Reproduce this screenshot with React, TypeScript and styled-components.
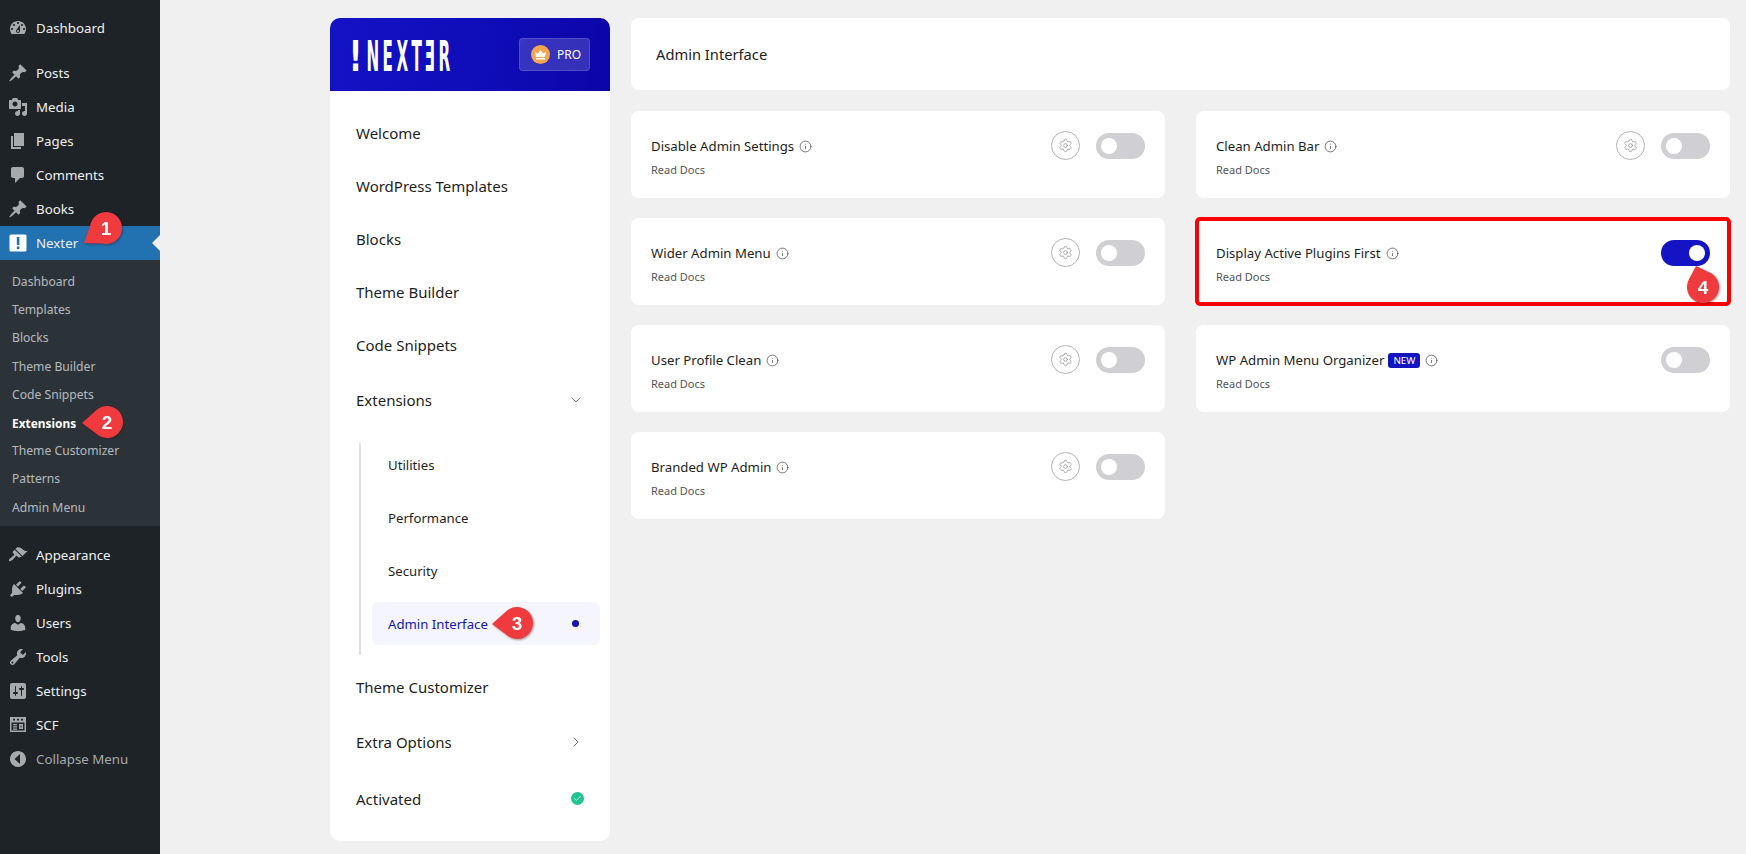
import React from "react";
import styled, { createGlobalStyle } from "styled-components";
import { Settings, Info, ChevronDown, ChevronRight, Check } from "lucide-react";

const Global = createGlobalStyle`
  html, body { margin: 0; padding: 0; background: #f0f0f1; }
  body { font-family: "Noto Sans", "Open Sans", sans-serif; }
  * { box-sizing: border-box; }
`;

const Page = styled.div`
  position: relative;
  display: flex;
  width: 1746px;
  height: 854px;
  overflow: hidden;
  background: #f0f0f1;
`;

const Sidebar = styled.nav`
  width: 160px;
  flex: none;
  background: #1d2327;
  padding-top: 11px;
`;

const MenuItem = styled.div<{ $active?: boolean; $muted?: boolean; $mt?: number }>`
  position: relative;
  display: flex;
  align-items: center;
  height: 34px;
  margin-top: ${(p) => p.$mt ?? 0}px;
  padding-left: 8px;
  gap: 8px;
  font-size: 13.3px;
  color: ${(p) => (p.$muted ? "#a7aaad" : "#f0f0f1")};
  background: ${(p) => (p.$active ? "#2271b1" : "transparent")};
  ${(p) =>
    p.$active
      ? `&::after {
          content: "";
          position: absolute;
          right: 0;
          top: 50%;
          margin-top: -8px;
          border: 8px solid transparent;
          border-right-color: #f0f0f1;
          border-left-width: 0;
        }`
      : ""}
`;

const MenuIcon = styled.svg<{ $light?: boolean }>`
  width: 20px;
  height: 20px;
  flex: none;
  fill: ${(p) => (p.$light ? "#ffffff" : "#a7aaad")};
`;

const SubMenu = styled.div`
  background: #2c3338;
  padding: 8px 0 4px;
`;

const SubItem = styled.div<{ $current?: boolean }>`
  position: relative;
  height: 28.2px;
  line-height: 28px;
  padding-left: 12px;
  font-size: ${(p) => (p.$current ? "11.9px" : "12.15px")};
  font-weight: ${(p) => (p.$current ? 700 : 400)};
  color: ${(p) => (p.$current ? "#ffffff" : "rgba(240,246,252,0.7)")};
`;

const Content = styled.main`
  flex: 1;
  display: flex;
  gap: 21px;
  padding: 18px 16px 13px 170px;
`;

const Panel = styled.aside`
  width: 280px;
  flex: none;
  background: #ffffff;
  border-radius: 10px;
  overflow: hidden;
`;

const PanelHead = styled.div`
  height: 73px;
  display: flex;
  align-items: center;
  justify-content: space-between;
  padding: 0 20px 0 19px;
  background: linear-gradient(100deg, #1313c6 0%, #0f0db8 55%, #0c05a8 100%);
`;

const Logo = styled.svg`
  width: 102px;
  height: 36px;
  display: block;
  overflow: visible;
`;

const ProBadge = styled.div`
  width: 71px;
  height: 33px;
  display: flex;
  align-items: center;
  gap: 7px;
  padding-left: 11px;
  font-size: 12px;
  color: #ffffff;
  background: rgba(255, 255, 255, 0.17);
  border: 1px solid rgba(255, 255, 255, 0.14);
  border-radius: 4px;
`;

const Crown = styled.span`
  width: 19px;
  height: 19px;
  border-radius: 50%;
  background: #f5a54f;
  display: flex;
  align-items: center;
  justify-content: center;
`;

const NavList = styled.div`
  padding-top: 15px;
`;

const NavRow = styled.div<{ $mt?: number }>`
  display: flex;
  align-items: center;
  justify-content: space-between;
  height: 53px;
  margin-top: ${(p) => p.$mt ?? 0}px;
  padding: 0 26px;
  font-size: 15px;
  color: #1e1e1e;
`;

const SubList = styled.div`
  margin: 17px 10px 0 29px;
  padding: 0 0 10px 11px;
  border-left: 2px solid #e1e1e4;
  display: flex;
  flex-direction: column;
  gap: 10px;
`;

const SubRow = styled.div<{ $active?: boolean }>`
  position: relative;
  height: 43px;
  display: flex;
  align-items: center;
  justify-content: space-between;
  padding: 0 21px 0 16px;
  border-radius: 6px;
  font-size: 13.2px;
  color: ${(p) => (p.$active ? "#1414b8" : "#1e1e1e")};
  background: ${(p) => (p.$active ? "#f5f6fd" : "transparent")};
`;

const Dot = styled.span`
  width: 7px;
  height: 7px;
  border-radius: 50%;
  background: #1414b8;
`;

const Activated = styled.span`
  width: 13px;
  height: 13px;
  border-radius: 50%;
  background: #1fc392;
  display: flex;
  align-items: center;
  justify-content: center;
`;

const Main = styled.section`
  flex: 1;
  display: flex;
  flex-direction: column;
  gap: 21px;
`;

const TopBar = styled.header`
  height: 72px;
  display: flex;
  align-items: center;
  padding-left: 25px;
  background: #ffffff;
  border-radius: 8px;
  font-size: 14.7px;
  color: #1e1e1e;
`;

const Columns = styled.div`
  display: flex;
  gap: 31px;
  align-items: flex-start;
`;

const Column = styled.div`
  flex: 1;
  display: flex;
  flex-direction: column;
  gap: 20px;
`;

const Card = styled.article<{ $highlight?: boolean }>`
  position: relative;
  height: 87px;
  display: flex;
  justify-content: space-between;
  padding: 20px 20px 0 20px;
  background: #ffffff;
  border-radius: ${(p) => (p.$highlight ? "4px" : "8px")};
  ${(p) => (p.$highlight ? "outline: 4px solid #fb0000; outline-offset: -3px;" : "")}
`;

const CardText = styled.div`
  padding-top: 5px;
`;

const TitleLine = styled.div`
  display: flex;
  align-items: center;
  height: 20px;
  gap: 5px;
  font-size: 13.2px;
  color: #1e1e1e;
`;

const InfoIcon = styled(Info)`
  width: 13px;
  height: 13px;
  color: #444;
`;

const NewBadge = styled.span`
  height: 15px;
  padding: 0 5px;
  margin: 0 0 0 -1px;
  display: inline-flex;
  align-items: center;
  border-radius: 3px;
  background: #1414c0;
  color: #ffffff;
  font-size: 9.8px;
`;

const Docs = styled.div`
  margin-top: 6px;
  line-height: 16px;
  font-size: 11px;
  color: #555;
`;

const Controls = styled.div`
  display: flex;
  align-items: center;
  gap: 16px;
  height: 29px;
`;

const GearButton = styled.span`
  width: 29px;
  height: 29px;
  border: 1px solid #b4b4b8;
  border-radius: 50%;
  display: flex;
  align-items: center;
  justify-content: center;
  color: #8a8a8e;
`;

const Toggle = styled.span<{ $on?: boolean }>`
  width: 49px;
  height: 26px;
  padding: 0 5px;
  border-radius: 13px;
  display: flex;
  align-items: center;
  justify-content: ${(p) => (p.$on ? "flex-end" : "flex-start")};
  background: ${(p) => (p.$on ? "#1414c4" : "#d0d0d4")};
`;

const Knob = styled.span`
  width: 16px;
  height: 16px;
  border-radius: 50%;
  background: #ffffff;
`;

const CalloutSvg = styled.svg<{ $x: number; $y: number }>`
  position: absolute;
  left: ${(p) => p.$x - 40}px;
  top: ${(p) => p.$y - 40}px;
  width: 80px;
  height: 80px;
  overflow: visible;
  filter: drop-shadow(1px 1.5px 1px rgba(60, 20, 20, 0.45));
  z-index: 5;
`;

const CalloutNum = styled.text`
  font-family: "Liberation Sans", sans-serif;
  font-weight: 700;
  font-size: 19px;
  fill: #ffffff;
`;

const LogoText = styled.text`
  font-family: "DejaVu Sans", sans-serif;
  font-weight: 700;
  font-size: 42px;
  fill: #ffffff;
`;

/* Balloon with its tail pointing at (tx, ty); coordinates are page pixels. */
function Callout({ n, x, y, tx, ty, r = 16 }: { n: number; x: number; y: number; tx: number; ty: number; r?: number }) {
  const a = Math.atan2(ty - y, tx - x);
  const s = 0.75;
  const px = (d: number) => 40 + r * Math.cos(a + d);
  const py = (d: number) => 40 + r * Math.sin(a + d);
  const d = `M${40 + tx - x} ${40 + ty - y}L${px(s)} ${py(s)}A${r} ${r} 0 1 1 ${px(-s)} ${py(-s)}Z`;
  return (
    <CalloutSvg $x={x} $y={y} viewBox="0 0 80 80">
      <path d={d} fill="#ef3a3e" />
      <CalloutNum x="40" y="47" textAnchor="middle">{n}</CalloutNum>
    </CalloutSvg>
  );
}

const icons: Record<string, string> = {
  dashboard:
    "M3.76 16h12.48c1.1-1.37 1.76-3.11 1.76-5 0-4.42-3.58-8-8-8s-8 3.58-8 8c0 1.89.66 3.63 1.76 5zM10 4c.55 0 1 .45 1 1s-.45 1-1 1-1-.45-1-1 .45-1 1-1zM6 6c.55 0 1 .45 1 1s-.45 1-1 1-1-.45-1-1 .45-1 1-1zm8 0c.55 0 1 .45 1 1s-.45 1-1 1-1-.45-1-1 .45-1 1-1zm-5.37 5.55L12 7v6c0 1.1-.9 2-2 2s-2-.9-2-2c0-.57.24-1.08.63-1.45zM4 10c.55 0 1 .45 1 1s-.45 1-1 1-1-.45-1-1 .45-1 1-1zm12 0c.55 0 1 .45 1 1s-.45 1-1 1-1-.45-1-1 .45-1 1-1zm-5 3c0-.55-.45-1-1-1s-1 .45-1 1 .45 1 1 1 1-.45 1-1z",
  pin:
    "M10.44 3.02l1.82-1.82 6.36 6.35-1.83 1.82c-1.05-.68-2.48-.57-3.41.36l-.75.75c-.92.93-1.04 2.35-.35 3.41l-1.83 1.82-2.41-2.41-2.8 2.79c-.42.42-3.38 2.71-3.8 2.29s1.86-3.39 2.28-3.81l2.79-2.79L4.1 9.36l1.83-1.82c1.05.69 2.48.57 3.4-.36l.75-.75c.93-.92 1.05-2.35.36-3.41z",
  media:
    "M13 11V4c0-.55-.45-1-1-1h-1.67L9 1H5L3.67 3H2c-.55 0-1 .45-1 1v7c0 .55.45 1 1 1h10c.55 0 1-.45 1-1zM7 4.5c1.38 0 2.5 1.12 2.5 2.5S8.38 9.5 7 9.5 4.5 8.38 4.5 7 5.62 4.5 7 4.5zM14 6h5v10.5c0 1.38-1.12 2.5-2.5 2.5S14 17.88 14 16.5s1.12-2.5 2.5-2.5c.17 0 .34.02.5.05V9h-3V6zm-4 8.05V13h2v3.5c0 1.38-1.12 2.5-2.5 2.5S7 17.88 7 16.5 8.12 14 9.5 14c.17 0 .34.02.5.05z",
  page: "M6 15V2h10v13H6zm-1 1h8v2H3V5h2v11z",
  comments: "M5 2h9c1.1 0 2 .9 2 2v7c0 1.1-.9 2-2 2h-2l-5 5v-5H5c-1.1 0-2-.9-2-2V4c0-1.1.9-2 2-2z",
  appearance:
    "M14.48 11.06L7.41 3.99l1.5-1.5c.5-.56 2.3-.47 3.51.32 1.21.8 1.43 1.28 2.91 2.1 1.18.64 2.45 1.26 4.45.85zm-.71.71L6.7 4.7 4.93 6.47c-.39.39-.39 1.02 0 1.41l1.06 1.06c.39.39.39 1.03 0 1.42-.6.6-1.43 1.11-2.21 1.69-.35.26-.7.53-1.01.84C1.43 13.23.4 15.32 1.1 16.02c.7.7 2.78-.34 4.12-1.67.31-.31.58-.66.84-1.01.58-.78 1.09-1.61 1.69-2.21.39-.39 1.03-.39 1.42 0l1.06 1.06c.39.39 1.02.39 1.41 0z",
  plugins:
    "M13.11 4.36L9.87 7.6 8 5.73l3.24-3.24c.35-.34 1.05-.2 1.56.32.52.51.66 1.21.31 1.55zm-8 1.77l.91-1.12 9.01 9.01-1.19.84c-.71.71-2.63 1.16-3.82 1.16H6.14L4.9 17.26c-.59.59-1.54.59-2.12 0-.59-.58-.59-1.53 0-2.12l1.24-1.24v-3.88c0-1.13.4-3.19 1.09-3.89zm7.26 3.97l3.24-3.24c.34-.35 1.04-.21 1.55.31.52.51.66 1.21.31 1.55l-3.24 3.25z",
  users:
    "M10 9.25c-2.27 0-2.73-3.44-2.73-3.44C7 4.02 7.82 2 9.97 2c2.16 0 2.98 2.02 2.71 3.81 0 0-.41 3.44-2.68 3.44zm0 2.57L12.72 10c2.39 0 4.52 2.33 4.52 4.53v2.49s-3.65 1.13-7.24 1.13c-3.65 0-7.24-1.13-7.24-1.13v-2.49c0-2.25 1.94-4.48 4.47-4.48z",
  tools:
    "M16.68 9.77c-1.34 1.34-3.3 1.67-4.95.99l-5.41 6.52c-.99.99-2.59.99-3.58 0s-.99-2.59 0-3.57l6.52-5.42c-.68-1.65-.35-3.61.99-4.95 1.28-1.28 3.12-1.62 4.72-1.06l-2.89 2.89 2.82 2.82 2.86-2.87c.53 1.58.18 3.39-1.08 4.65zM3.81 16.21c.4.39 1.04.39 1.43 0 .4-.4.4-1.04 0-1.43-.39-.4-1.03-.4-1.43 0-.39.39-.39 1.03 0 1.43z",
  settings:
    "M18 16V4c0-1.1-.9-2-2-2H4c-1.1 0-2 .9-2 2v12c0 1.1.9 2 2 2h12c1.1 0 2-.9 2-2zM8 11h1c.55 0 1 .45 1 1s-.45 1-1 1H8v1.5c0 .28-.22.5-.5.5s-.5-.22-.5-.5V13H6c-.55 0-1-.45-1-1s.45-1 1-1h1V5.5c0-.28.22-.5.5-.5s.5.22.5.5V11zm5-2h-1c-.55 0-1-.45-1-1s.45-1 1-1h1V5.5c0-.28.22-.5.5-.5s.5.22.5.5V7h1c.55 0 1 .45 1 1s-.45 1-1 1h-1v5.5c0 .28-.22.5-.5.5s-.5-.22-.5-.5V9z",
  scf:
    "M2 2h16v15H2V2zm1.500 5.500V15.500h13V7.500h-13zM5 3.800v1.700h2V3.800H5zm4 0v1.700h2V3.800H9zm4 0v1.700h2V3.800h-2zM5 9h4v1.200H5V9zm6 0h4v5h-4V9zm1.500 1.500v2h1v-2h-1zM5 11.300h4v1.200H5v-1.200zM5 13.500h4v1.200H5v-1.200z",
  collapse: "M18 10c0-4.420-3.580-8-8-8s-8 3.580-8 8 3.580 8 8 8 8-3.580 8-8zm-6 5L6.500 10 12 5v10z",
};

const Icon = ({ name }: { name: string }) => (
  <MenuIcon viewBox="0 0 20 20">
    <path fillRule="evenodd" d={icons[name]} />
  </MenuIcon>
);

const subItems = ["Dashboard", "Templates", "Blocks", "Theme Builder", "Code Snippets", "Extensions", "Theme Customizer", "Patterns", "Admin Menu"];
const topItems = [["Posts", "pin"], ["Media", "media"], ["Pages", "page"], ["Comments", "comments"], ["Books", "pin"]];
const lowItems = [["Plugins", "plugins"], ["Users", "users"], ["Tools", "tools"], ["Settings", "settings"], ["SCF", "scf"]];
const navTop = ["Welcome", "WordPress Templates", "Blocks", "Theme Builder", "Code Snippets"];
const leftCards = ["Disable Admin Settings", "Wider Admin Menu", "User Profile Clean", "Branded WP Admin"];
const LOGO_SCALE = 0.36;
const logoX = [17.5, 33.5, 47.5, 62.5, 75.5, 89.5].map((v) => v / LOGO_SCALE).join(" ");

const LeftCard = ({ title }: { title: string }) => (
  <Card>
    <CardText>
      <TitleLine>{title}<InfoIcon strokeWidth={1.3} /></TitleLine>
      <Docs>Read Docs</Docs>
    </CardText>
    <Controls>
      <GearButton><Settings size={15} strokeWidth={1.1} /></GearButton>
      <Toggle><Knob /></Toggle>
    </Controls>
  </Card>
);

export default function App() {
  return (
    <Page>
      <Global />
      <Sidebar>
        <MenuItem><Icon name="dashboard" />Dashboard</MenuItem>
        {topItems.map(([label, icon], i) => (
          <MenuItem key={label} $mt={i === 0 ? 11 : 0}><Icon name={icon} />{label}</MenuItem>
        ))}
        <MenuItem $active>
          <MenuIcon viewBox="0 0 20 20" $light>
            <rect x="1.500" y="1.500" width="17" height="17" rx="1.500" />
            <rect x="8.800" y="4" width="2.600" height="8" fill="#2271b1" />
            <rect x="8.800" y="13.500" width="2.600" height="2.600" fill="#2271b1" />
          </MenuIcon>
          Nexter
        </MenuItem>
        <SubMenu>
          {subItems.map((s) => (
            <SubItem key={s} $current={s === "Extensions"}>{s}</SubItem>
          ))}
        </SubMenu>
        <MenuItem $mt={12}><Icon name="appearance" />Appearance</MenuItem>
        {lowItems.map(([label, icon]) => (
          <MenuItem key={label}><Icon name={icon} />{label}</MenuItem>
        ))}
        <MenuItem $muted><Icon name="collapse" />Collapse Menu</MenuItem>
      </Sidebar>

      <Content>
        <Panel>
          <PanelHead>
            <Logo viewBox="0 0 102 36">
              <LogoText transform="scale(0.68 1)" x="0" y="33.500">!</LogoText>
              <LogoText transform={`scale(${LOGO_SCALE} 1)`} x={logoX} y="33.500">NEXTƎR</LogoText>
            </Logo>
            <ProBadge>
              <Crown>
                <svg width="13" height="11" viewBox="0 0 13 11">
                  <path d="M1 2.500l2.800 2.300L6.500 1l2.700 3.800L12 2.500 11 8H2zM2 9h9v1.500H2z" fill="#fff" />
                </svg>
              </Crown>
              PRO
            </ProBadge>
          </PanelHead>
          <NavList>
            {navTop.map((n) => <NavRow key={n}>{n}</NavRow>)}
            <NavRow $mt={2}>Extensions<ChevronDown size={16} strokeWidth={1.3} color="#666" /></NavRow>
            <SubList>
              <SubRow>Utilities</SubRow>
              <SubRow>Performance</SubRow>
              <SubRow>Security</SubRow>
              <SubRow $active>Admin Interface<Dot /></SubRow>
            </SubList>
            <NavRow $mt={5}>Theme Customizer</NavRow>
            <NavRow $mt={2}>Extra Options<ChevronRight size={16} strokeWidth={1.3} color="#666" /></NavRow>
            <NavRow $mt={4}>
              Activated
              <Activated><Check size={9} color="#fff" strokeWidth={2} /></Activated>
            </NavRow>
          </NavList>
        </Panel>

        <Main>
          <TopBar>Admin Interface</TopBar>
          <Columns>
            <Column>
              {leftCards.map((t) => <LeftCard key={t} title={t} />)}
            </Column>
            <Column>
              <LeftCard title="Clean Admin Bar" />
              <Card $highlight>
                <CardText>
                  <TitleLine>Display Active Plugins First<InfoIcon strokeWidth={1.3} /></TitleLine>
                  <Docs>Read Docs</Docs>
                </CardText>
                <Controls><Toggle $on><Knob /></Toggle></Controls>
              </Card>
              <Card>
                <CardText>
                  <TitleLine>WP Admin Menu Organizer<NewBadge>NEW</NewBadge><InfoIcon strokeWidth={1.3} /></TitleLine>
                  <Docs>Read Docs</Docs>
                </CardText>
                <Controls><Toggle><Knob /></Toggle></Controls>
              </Card>
            </Column>
          </Columns>
        </Main>
      </Content>

      <Callout n={1} x={106} y={228} tx={84} ty={243} />
      <Callout n={2} x={107} y={422} tx={82} ty={423} />
      <Callout n={3} x={517} y={623} tx={492} ty={624} />
      <Callout n={4} x={1703} y={287} tx={1696} ty={266} />
    </Page>
  );
}
